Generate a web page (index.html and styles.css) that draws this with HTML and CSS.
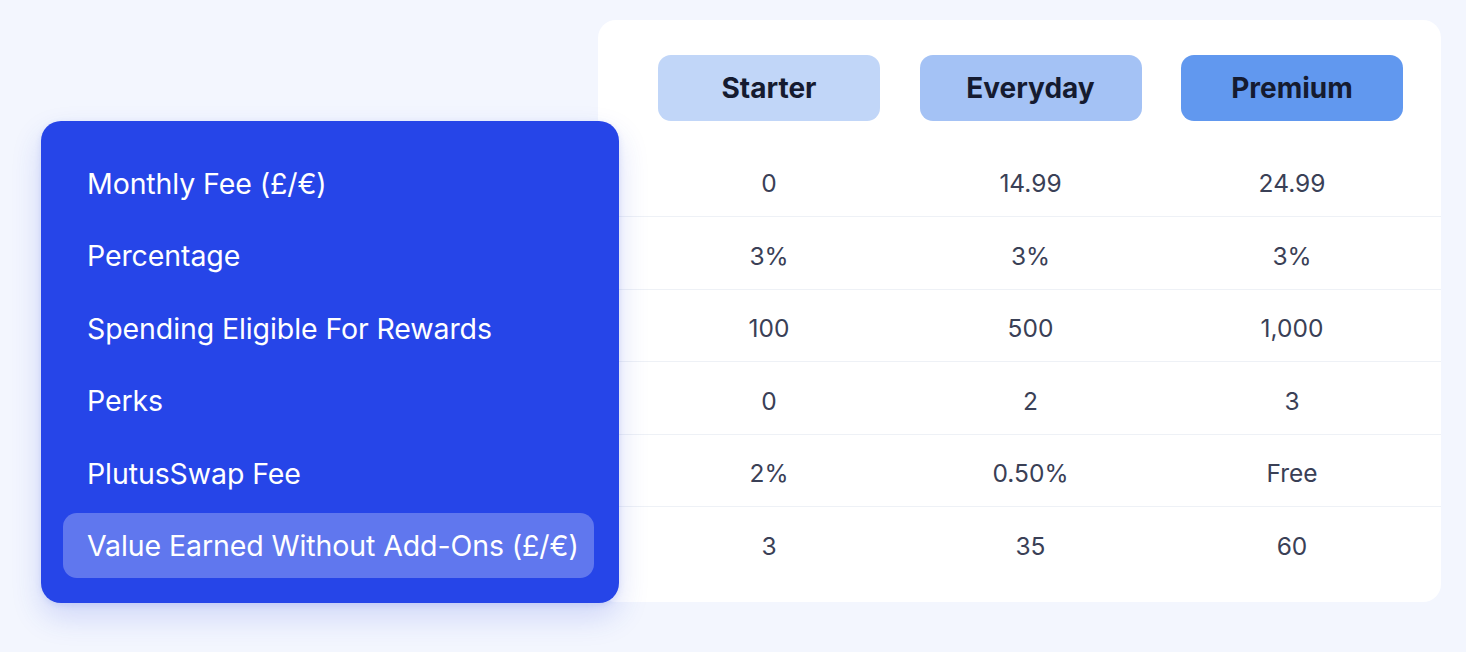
FILE: index.html
```html
<!DOCTYPE html>
<html lang="en">
<head>
<meta charset="utf-8">
<title>Plans comparison</title>
<link rel="stylesheet" href="styles.css">
</head>
<body>
<main class="compare">
  <section class="labels">
    <div class="label-row">Monthly Fee (£/€)</div>
    <div class="label-row">Percentage</div>
    <div class="label-row">Spending Eligible For Rewards</div>
    <div class="label-row">Perks</div>
    <div class="label-row">PlutusSwap Fee</div>
    <div class="label-row active"><span class="label-pill">Value Earned Without Add-Ons (£/€)</span></div>
  </section>
  <section class="card">
    <div class="head">
      <div class="pill starter">Starter</div>
      <div class="pill everyday">Everyday</div>
      <div class="pill premium">Premium</div>
    </div>
    <div class="row"><span>0</span><span>14.99</span><span>24.99</span></div>
    <div class="row"><span>3%</span><span>3%</span><span>3%</span></div>
    <div class="row"><span>100</span><span>500</span><span>1,000</span></div>
    <div class="row"><span>0</span><span>2</span><span>3</span></div>
    <div class="row"><span>2%</span><span>0.50%</span><span>Free</span></div>
    <div class="row"><span>3</span><span>35</span><span>60</span></div>
  </section>
</main>
</body>
</html>
```
FILE: styles.css
```css
* { box-sizing: border-box; }
html, body { margin: 0; padding: 0; }
body {
  background: #f3f6fe;
  font-family: Inter, "Noto Sans", sans-serif;
  width: 1466px;
  height: 652px;
  overflow: hidden;
}
.compare {
  display: flex;
  align-items: flex-start;
  padding: 20px 0 0 41px;
}
.labels {
  position: relative;
  z-index: 2;
  width: 578px;
  margin-top: 101px;
  margin-right: -21px;
  background: #2645e8;
  border-radius: 20px;
  padding: 25.75px 25px 21px 22px;
  box-shadow: 0 14px 30px rgba(44, 72, 220, 0.18), 0 2px 6px rgba(44, 72, 220, 0.12);
  color: #ffffff;
}
.label-row {
  height: 72.5px;
  display: flex;
  align-items: center;
  padding-left: 24px;
  font-size: 28.5px;
  letter-spacing: -0.1px;
}
.label-row.active {
  padding: 4px 0;
}
.label-pill {
  display: flex;
  align-items: center;
  width: 100%;
  height: 100%;
  padding-left: 24px;
  border-radius: 14px;
  background: rgba(255, 255, 255, 0.27);
}
.card {
  width: 843px;
  height: 582px;
  background: #ffffff;
  border-radius: 18px;
  padding: 35px 0 0 0;
}
.head, .row {
  display: grid;
  grid-template-columns: 222px 222px 222px;
  column-gap: 39.5px;
  padding: 0 39px 0 60px;
}
.head { margin-bottom: 22.75px; }
.pill {
  height: 66px;
  border-radius: 13px;
  display: flex;
  align-items: center;
  justify-content: center;
  font-size: 28px;
  font-weight: 700;
  color: #151b30;
}
.starter { background: #c1d6f8; }
.everyday { background: #a4c2f5; }
.premium { background: #6198ef; }
.row {
  height: 72.5px;
  padding-top: 5px;
  align-items: center;
  justify-items: center;
  font-size: 24.5px;
  color: #3a4056;
}
.row + .row { border-top: 1px solid #eef1f6; }
```
